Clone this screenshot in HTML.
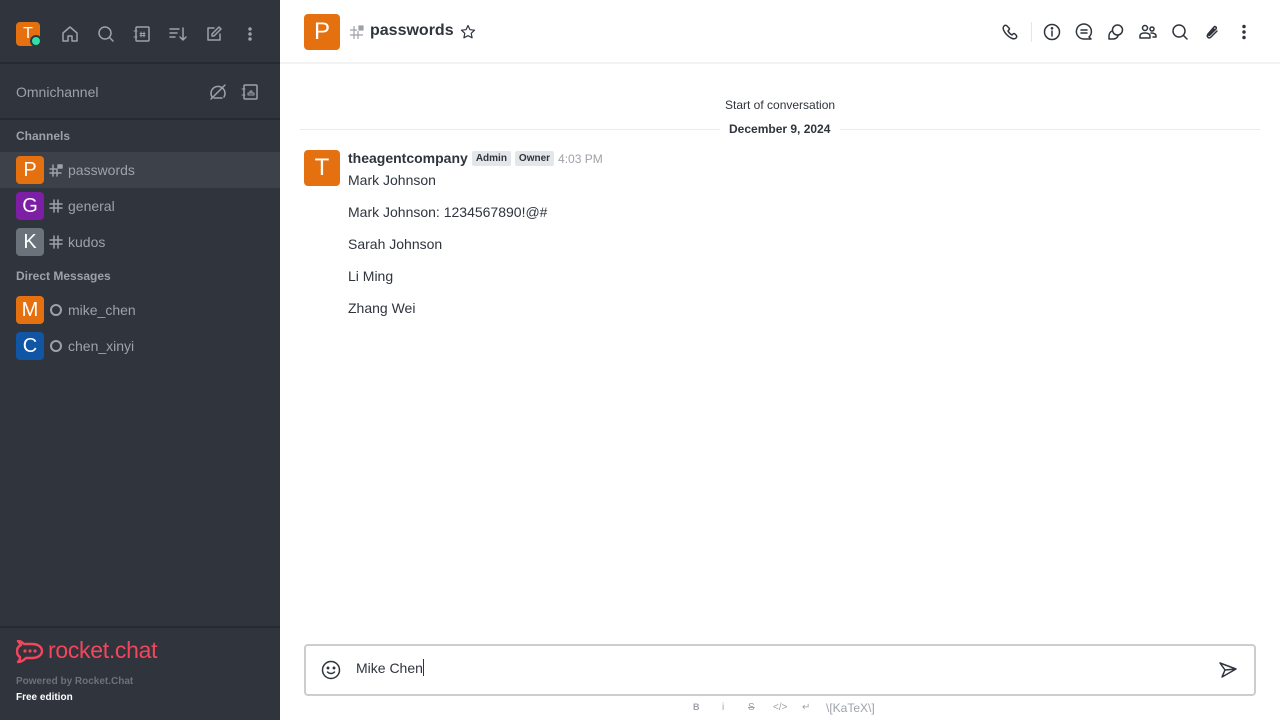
<!DOCTYPE html>
<html><head><meta charset="utf-8"><style>
*{margin:0;padding:0;box-sizing:border-box}
body{width:1280px;height:720px;overflow:hidden;font-family:"Liberation Sans",sans-serif;background:#fff;position:relative}
.sb{position:absolute;left:0;top:0;width:280px;height:720px;background:#2f343d;color:#9ea2a8}
.abs{position:absolute;white-space:nowrap}
.div{position:absolute;left:0;width:280px;height:2px;background:#262a31}
.av{position:absolute;width:28px;height:28px;border-radius:4px;color:#fff;font-size:20px;text-align:center;line-height:28px}
.item{position:absolute;left:0;width:280px;height:36px}
.item .name{position:absolute;left:68px;top:10px;font-size:14px;color:#9ea2a8}
.sec{position:absolute;left:16px;font-size:12px;font-weight:bold;color:#9ea2a8}
svg.i{position:absolute;fill:none;stroke:#9ea2a8;stroke-width:1.5;stroke-linecap:round;stroke-linejoin:round}
svg.h{position:absolute;fill:none;stroke:#2f343d;stroke-width:1.5;stroke-linecap:round;stroke-linejoin:round}
.msg{position:absolute;left:348px;font-size:14px;color:#2f343d;white-space:nowrap}
.tag{display:inline-block;background:#e4e7ea;color:#2f343d;font-size:10px;font-weight:bold;padding:2px 4px;border-radius:2px;vertical-align:2px}
</style></head><body>
<div class="sb">
  <div class="av" style="left:16px;top:22px;width:24px;height:24px;line-height:24px;font-size:16px;background:#e5700f">T</div>
  <div class="abs" style="left:30px;top:35px;width:12px;height:12px;border-radius:50%;background:#2de0a5;border:2px solid #2f343d"></div>
  <svg class="i" style="left:60px;top:24px" width="20" height="20" viewBox="0 0 20 20"><path d="M3 9L10 3l7 6v8h-5v-5H8v5H3z"/></svg>
  <svg class="i" style="left:96px;top:24px" width="20" height="20" viewBox="0 0 20 20"><circle cx="9" cy="9" r="6"/><path d="M13.5 13.5L17 17"/></svg>
  <svg class="i" style="left:132px;top:24px" width="20" height="20" viewBox="0 0 20 20"><rect x="4" y="3" width="13" height="14" rx="1"/><path d="M2 7h3M2 13h3M9 8v5M12 8v5M8 9.5h5M8 11.5h5" stroke-width="1"/></svg>
  <svg class="i" style="left:168px;top:24px" width="20" height="20" viewBox="0 0 20 20"><path d="M2 5h9M2 9h7M2 13h5M15 4v12M12 13l3 3 3-3"/></svg>
  <svg class="i" style="left:204px;top:24px" width="20" height="20" viewBox="0 0 20 20"><path d="M10 4H4v12h12v-6"/><path d="M15 3l2 2-7 7H8v-2z"/></svg>
  <svg class="i" style="left:240px;top:24px" width="20" height="20" viewBox="0 0 20 20"><circle cx="10" cy="5" r="1" fill="#9ea2a8"/><circle cx="10" cy="10" r="1" fill="#9ea2a8"/><circle cx="10" cy="15" r="1" fill="#9ea2a8"/></svg>
  <div class="div" style="top:62px"></div>
  <div class="abs" style="left:16px;top:84px;font-size:14px">Omnichannel</div>
  <svg class="i" style="left:208px;top:82px" width="20" height="20" viewBox="0 0 20 20"><path d="M4 15a7 7 0 1 1 12 0"/><path d="M3 17L17 3"/><path d="M6 16h8"/></svg>
  <svg class="i" style="left:240px;top:82px" width="20" height="20" viewBox="0 0 20 20"><rect x="4" y="3" width="13" height="14" rx="1"/><path d="M2 7h3M2 13h3M8 13h6v-2H8zM10 9h2v2h-2z" stroke-width="1"/></svg>
  <div class="div" style="top:118px"></div>
  <div class="sec" style="top:129px">Channels</div>
  <div class="item" style="top:152px;background:#3c414a"><div class="av" style="left:16px;top:4px;background:#e5700f">P</div>
   <svg class="i" style="left:49px;top:11px" width="14" height="14" viewBox="0 0 14 14" stroke-width="1.2"><path d="M4 2v11M8 6v7M1 6h6M1 10h11"/><rect x="9" y="2" width="4" height="3" fill="#9ea2a8"/></svg>
   <div class="name">passwords</div></div>
  <div class="item" style="top:188px"><div class="av" style="left:16px;top:4px;background:#7c1fa5">G</div>
   <svg class="i" style="left:49px;top:11px" width="14" height="14" viewBox="0 0 14 14" stroke-width="1.2"><path d="M5 1v12M9 1v12M1 5h12M1 9h12"/></svg>
   <div class="name">general</div></div>
  <div class="item" style="top:224px"><div class="av" style="left:16px;top:4px;background:#6c727a">K</div>
   <svg class="i" style="left:49px;top:11px" width="14" height="14" viewBox="0 0 14 14" stroke-width="1.2"><path d="M5 1v12M9 1v12M1 5h12M1 9h12"/></svg>
   <div class="name">kudos</div></div>
  <div class="sec" style="top:269px">Direct Messages</div>
  <div class="item" style="top:292px"><div class="av" style="left:16px;top:4px;background:#e5700f">M</div>
   <div class="abs" style="left:50px;top:12px;width:12px;height:12px;border:2px solid #9ea2a8;border-radius:50%"></div>
   <div class="name">mike_chen</div></div>
  <div class="item" style="top:328px"><div class="av" style="left:16px;top:4px;background:#1155a5">C</div>
   <div class="abs" style="left:50px;top:12px;width:12px;height:12px;border:2px solid #9ea2a8;border-radius:50%"></div>
   <div class="name">chen_xinyi</div></div>
  <div class="div" style="top:626px"></div>
  <svg class="abs" style="left:16px;top:640px" width="28" height="24" viewBox="0 0 28 24"><path d="M2 1c3 0 5 2 6 3h8c6 0 10 3 10 7s-4 7-10 7h-6c-2 2-5 4-8 4 2-2 2-3 2-5-2-1-3-3-3-6 0-3 2-5 4-6z" fill="none" stroke="#f5455c" stroke-width="2.4" stroke-linejoin="round"/><circle cx="9" cy="11" r="1.6" fill="#f5455c"/><circle cx="14" cy="11" r="1.6" fill="#f5455c"/><circle cx="19" cy="11" r="1.6" fill="#f5455c"/></svg>
  <div class="abs" style="left:48px;top:637px;font-size:23px;color:#f5455c;letter-spacing:-0.3px">rocket.chat</div>
  <div class="abs" style="left:16px;top:676px;font-size:10px;font-weight:bold;color:#6c727a">Powered by Rocket.Chat</div>
  <div class="abs" style="left:16px;top:692px;font-size:10px;font-weight:bold;color:#fff">Free edition</div>
</div>

<div class="av" style="left:304px;top:14px;width:36px;height:36px;line-height:36px;font-size:24px;background:#e5700f">P</div>
<svg class="abs" style="left:349px;top:24px" width="16" height="16" viewBox="0 0 16 16" fill="none" stroke="#9ea2a8" stroke-width="1.2"><path d="M5 2v13M9 7v8M1 6h7M1 11h13"/><rect x="10" y="2" width="4" height="4" fill="#9ea2a8"/></svg>
<div class="abs" style="left:370px;top:22px;font-size:16px;font-weight:bold;color:#2f343d">passwords</div>
<svg class="abs" style="left:460px;top:24px" width="16" height="16" viewBox="0 0 16 16" fill="none" stroke="#2f343d" stroke-width="1.2" stroke-linejoin="round"><path d="M8 1.5l2 4.2 4.5.5-3.3 3.1.9 4.5L8 11.6 3.9 13.8l.9-4.5L1.5 6.2 6 5.7z"/></svg>
<svg class="h" style="left:1000px;top:22px" width="20" height="20" viewBox="0 0 20 20"><path d="M4 4c1-1 2-1 3 0l2 2c.6.6.4 1.4-.2 2L8 9c1 2 2 3 4 4l1-1c.6-.6 1.4-.6 2 0l1 1c1 1 1 2 0 3-2 2-6 0-9-3S2 6 4 4z"/></svg>
<div class="abs" style="left:1031px;top:22px;width:1px;height:20px;background:#e4e7ea"></div>
<svg class="h" style="left:1042px;top:22px" width="20" height="20" viewBox="0 0 20 20"><circle cx="10" cy="10" r="7.5"/><path d="M10 9v5"/><circle cx="10" cy="6.3" r=".6" fill="#2f343d"/></svg>
<svg class="h" style="left:1074px;top:22px" width="20" height="20" viewBox="0 0 20 20"><path d="M17 17l-2-2a7.5 7.5 0 1 0-5 2z" /><path d="M7 8h6M7 11h6"/></svg>
<svg class="h" style="left:1106px;top:22px" width="20" height="20" viewBox="0 0 20 20"><circle cx="11.5" cy="8" r="5"/><path d="M6 9c-2 1-3 3-3 5v3h4c2 0 4-1 5-3"/></svg>
<svg class="h" style="left:1138px;top:22px" width="20" height="20" viewBox="0 0 20 20"><circle cx="7" cy="6" r="2.5"/><circle cx="14" cy="7" r="2"/><path d="M2 16v-2c0-2 2-3 5-3s5 1 5 3v2zM13 11c3 0 5 1 5 3v1h-3"/></svg>
<svg class="h" style="left:1170px;top:22px" width="20" height="20" viewBox="0 0 20 20"><circle cx="9" cy="9" r="6"/><path d="M13.5 13.5L17 17"/></svg>
<svg class="h" style="left:1202px;top:22px" width="20" height="20" viewBox="0 0 20 20"><path d="M15 9l-6 6c-2 2-5 0-3-3l6-7c1-1 3 0 2 2l-6 6c-1 1-2 0-1-1l5-5"/></svg>
<svg class="h" style="left:1234px;top:22px" width="20" height="20" viewBox="0 0 20 20"><circle cx="10" cy="4.5" r="1" fill="#2f343d"/><circle cx="10" cy="10" r="1" fill="#2f343d"/><circle cx="10" cy="15.5" r="1" fill="#2f343d"/></svg>
<div class="abs" style="left:280px;top:62px;width:1000px;height:2px;background:#f2f3f5"></div>

<div class="abs" style="left:725px;top:98px;font-size:12px;color:#2f343d">Start of conversation</div>
<div class="abs" style="left:300px;top:129px;width:420px;height:1px;background:#ebecef"></div>
<div class="abs" style="left:840px;top:129px;width:420px;height:1px;background:#ebecef"></div>
<div class="abs" style="left:729px;top:122px;font-size:12px;font-weight:bold;color:#2f343d">December 9, 2024</div>

<div class="av" style="left:304px;top:150px;width:36px;height:36px;line-height:36px;font-size:24px;background:#e5700f">T</div>
<div class="msg" style="top:150px"><b style="color:#2f343d">theagentcompany</b><span class="tag" style="margin-left:4px">Admin</span><span class="tag" style="margin-left:4px">Owner</span><span style="font-size:12px;color:#9ea2a8;margin-left:4px">4:03 PM</span></div>
<div class="msg" style="top:172px">Mark Johnson</div>
<div class="msg" style="top:204px">Mark Johnson: 1234567890!@#</div>
<div class="msg" style="top:236px">Sarah Johnson</div>
<div class="msg" style="top:268px">Li Ming</div>
<div class="msg" style="top:300px">Zhang Wei</div>

<div class="abs" style="left:304px;top:644px;width:952px;height:52px;border:2px solid #cbced1;border-radius:4px"></div>
<svg class="h" style="left:320px;top:659px" width="22" height="22" viewBox="0 0 22 22"><circle cx="11" cy="11" r="8.5"/><circle cx="8" cy="9" r=".7" fill="#2f343d"/><circle cx="14" cy="9" r=".7" fill="#2f343d"/><path d="M7.5 13c2 2 5 2 7 0"/></svg>
<div class="abs" style="left:356px;top:659px;font-size:14px;color:#2f343d">Mike Chen<span style="display:inline-block;width:1px;height:17px;background:#2f343d;vertical-align:-3px"></span></div>
<svg class="h" style="left:1217px;top:659px" width="22" height="22" viewBox="0 0 22 22"><path d="M3 4l16 6-14 8 3-7zM8 11l11-1"/></svg>
<div class="abs" style="left:693px;top:702px;font-size:10px;color:#9ea2a8;width:200px;height:16px">
<span style="position:absolute;left:0;font-weight:bold;font-size:9px">B</span>
<span style="position:absolute;left:29px">i</span>
<span style="position:absolute;left:55px;text-decoration:line-through">S</span>
<span style="position:absolute;left:80px">&lt;/&gt;</span>
<span style="position:absolute;left:109px">↵</span>
<span style="position:absolute;left:133px;top:-1px;font-size:12px;white-space:nowrap">\[KaTeX\]</span>
</div>
</body></html>
